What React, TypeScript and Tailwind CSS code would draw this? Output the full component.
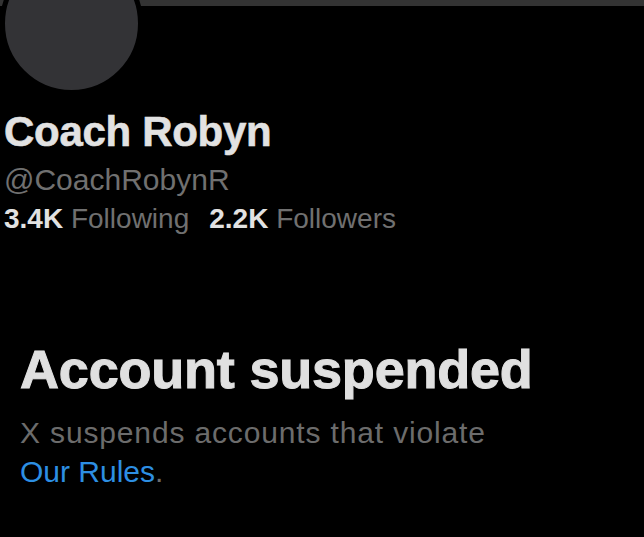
import React from "react";

export default function App() {
  return (
    <div
      className="w-[644px] h-[537px] overflow-hidden bg-black"
      style={{ fontFamily: '"Liberation Sans", Arial, sans-serif' }}
    >
      <div className="h-[6px] w-full bg-[#333333]" />
      <div className="mt-[-54px] h-[143px] w-[143px] rounded-full border-[5px] border-black bg-[#333336]" />
      <div className="pl-[4px]">
        <div className="mt-[14px] text-[42px] leading-[46px] font-bold tracking-[-0.3px] text-[#e2e2e2] [-webkit-text-stroke:0.6px_#e2e2e2]">
          Coach Robyn
        </div>
        <div className="mt-[8px] text-[30px] leading-[34px] text-[#707070]">
          @CoachRobynR
        </div>
        <div className="mt-[6px] flex text-[28px] leading-[32px]">
          <span className="mr-[20px]">
            <span className="font-bold text-[#e2e2e2]">3.4K</span>{" "}
            <span className="text-[#707070]">Following</span>
          </span>
          <span>
            <span className="font-bold text-[#e2e2e2]">2.2K</span>{" "}
            <span className="text-[#707070]">Followers</span>
          </span>
        </div>
      </div>
      <div className="pl-[20px]">
        <div className="mt-[104px] text-[54px] leading-[60px] font-bold tracking-[-0.2px] text-[#e0e0e0] [-webkit-text-stroke:1px_#e0e0e0]">
          Account suspended
        </div>
        <div className="mt-[14px] text-[30px] leading-[39px]">
          <div className="tracking-[0.85px] text-[#6c6c6c]">
            X suspends accounts that violate
          </div>
          <div>
            <span className="text-[#2d8fe3]">Our Rules</span>
            <span className="text-[#6c6c6c]">.</span>
          </div>
        </div>
      </div>
    </div>
  );
}
